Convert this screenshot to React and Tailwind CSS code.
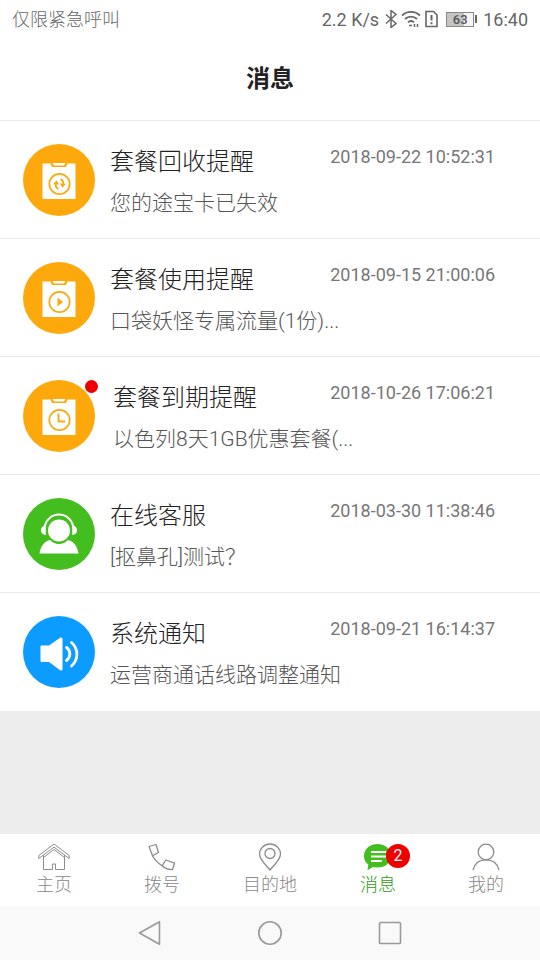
import React, { useState } from "react";

const RecycleIcon = () => (
    <g fill="none" stroke="#fea90b" strokeWidth="1.800">
        <path d="M35.500 44.800c-2 -.8 -3 -2.800 -2.700 -5M37.500 35.200c2 .8 3 2.800 2.700 5" />
        <path d="M30.200 40.200l3.300 -3.900l2.600 4.300zM42.800 39.800l-3.300 3.900l-2.600 -4.300z" fill="#fea90b" stroke="none" />
    </g>
);

const PlayIcon = () => (
    <path d="M34.500 35.500v9l5.500 -4.500z" fill="#fea90b" />
);

const ClockIcon = () => (
    <path d="M35.500 33.500v8h6.500" fill="none" stroke="#fea90b" strokeWidth="1.800" />
);

const PackageIcon = ({ children }) => (
    <svg viewBox="0 0 72 72" className="block size-[72px]" aria-hidden="true">
        <circle cx="36" cy="36" r="36" fill="#fea90b" />
        <path d="M19.500 19.500h8l1.500 3.500h14l1.500 -3.500h8v35.500h-33z" fill="#fff" />
        <path d="M29.500 19h13l-1.500 2.500h-10z" fill="#fff" />
        <circle cx="36.500" cy="40" r="10.200" fill="none" stroke="#fea90b" strokeWidth="1.700" />
        {children}
    </svg>
);

const SupportIcon = () => (
    <svg viewBox="0 0 72 72" className="block size-[72px]" aria-hidden="true">
        <circle cx="36" cy="36" r="36" fill="#44be1f" />
        <circle cx="36" cy="32.500" r="11" fill="#fff" />
        <path d="M21.800 28.500a14.400 14.400 0 0 1 28.400 0" fill="none" stroke="#fff" strokeWidth="2" />
        <path d="M22.800 27.500v9.500c-6.500 0 -6.500 -9.500 0 -9.500zM49.200 27.500v9.500c6.500 0 6.500 -9.500 0 -9.500z" fill="#fff" />
        <path d="M16.500 55.500c1 -7 4.500 -12 10.500 -13.500c5 5.500 13 5.500 18 0c6 1.500 9.500 6.500 10.500 13.500z" fill="#fff" />
    </svg>
);

const SpeakerIcon = () => (
    <svg viewBox="0 0 72 72" className="block size-[72px]" aria-hidden="true">
        <circle cx="36" cy="36" r="36" fill="#0c9cff" />
        <path d="M18.500 29.500h7.500l11.500 -8q2 -.5 2 1.500v30q0 2 -2 1.500l-11.500 -8.500h-7.500q-1 0 -1 -1v-14.500q0 -1 1 -1z" fill="#fff" />
        <path d="M43.500 31.500a8 8 0 0 1 0 13M48.500 26.500a15.500 15.500 0 0 1 0 23.500" fill="none" stroke="#fff" strokeWidth="2.800" strokeLinecap="round" />
    </svg>
);

const messages = [
    {
        id: 1,
        title: "套餐回收提醒",
        text: "您的途宝卡已失效",
        date: "2018-09-22 10:52:31",
        unread: false,
        icon: <PackageIcon><RecycleIcon /></PackageIcon>,
    },
    {
        id: 2,
        title: "套餐使用提醒",
        text: "口袋妖怪专属流量(1份)...",
        date: "2018-09-15 21:00:06",
        unread: false,
        icon: <PackageIcon><PlayIcon /></PackageIcon>,
    },
    {
        id: 3,
        title: "套餐到期提醒",
        text: "以色列8天1GB优惠套餐(...",
        date: "2018-10-26 17:06:21",
        unread: true,
        icon: <PackageIcon><ClockIcon /></PackageIcon>,
    },
    {
        id: 4,
        title: "在线客服",
        text: "[抠鼻孔]测试？",
        date: "2018-03-30 11:38:46",
        unread: false,
        icon: <SupportIcon />,
    },
    {
        id: 5,
        title: "系统通知",
        text: "运营商通话线路调整通知",
        date: "2018-09-21 16:14:37",
        unread: false,
        icon: <SpeakerIcon />,
    },
];

const tabs = [
    {
        key: "home",
        label: "主页",
        icon: (
            <svg viewBox="0 0 32 28" className="h-7 w-8" fill="none" stroke="#8c8c8c" strokeWidth="1" aria-hidden="true">
                <path d="M.8 12.500L16 1l15.200 11.500v3L16 4.200L.8 15.500z" />
                <path d="M5.500 12.300v14.200h9v-5.500h3v5.500h9v-14.200" />
                <path d="M5.500 14.500L16 6.500l10.500 8" />
            </svg>
        ),
    },
    {
        key: "dial",
        label: "拨号",
        icon: (
            <svg viewBox="0 0 32 28" className="h-7 w-8" fill="none" stroke="#8c8c8c" strokeWidth="1.300" strokeLinejoin="round" aria-hidden="true">
                <path d="M3 3.500l7 -2l2.500 8l-6 3.300z" />
                <path d="M6.500 12.800c2 4 5 7 9.500 10" />
                <path d="M16 22.800l4 -5.800l8.500 3.200l-2 6.300c-4 .3 -7.500 -1.200 -10.500 -3.700z" />
            </svg>
        ),
    },
    {
        key: "places",
        label: "目的地",
        icon: (
            <svg viewBox="0 0 32 28" className="h-7 w-8" fill="none" stroke="#8c8c8c" strokeWidth="1.300" aria-hidden="true">
                <path d="M16 27c-3 -4 -10.500 -10 -10.500 -16a10.500 10 0 0 1 21 0c0 6 -7.500 12 -10.500 16z" />
                <circle cx="16" cy="10.500" r="5" />
            </svg>
        ),
    },
    {
        key: "messages",
        label: "消息",
        badge: 2,
        icon: (
            <svg viewBox="0 0 32 28" className="h-7 w-8" aria-hidden="true">
                <path d="M15.500 1c8 0 13.500 5.300 13.500 12s-5.500 11.500 -13.500 11.500c-2 0 -3.500 -.3 -4.500 -.5l-5.500 3.200l.8 -5.700c-3 -2.200 -4.300 -5 -4.300 -8.500c0 -6.700 5.500 -12 13.500 -12z" fill="#44be1f" />
                <path d="M9 9h15M9 13.500h15M9 18h11" stroke="#fff" strokeWidth="2" />
            </svg>
        ),
    },
    {
        key: "me",
        label: "我的",
        icon: (
            <svg viewBox="0 0 32 28" className="h-7 w-8" fill="none" stroke="#8c8c8c" strokeWidth="1.300" aria-hidden="true">
                <circle cx="16" cy="9" r="7.800" />
                <path d="M3 27c1.500 -6.500 6.500 -10.200 13 -10.200s11.500 3.700 13 10.200" />
            </svg>
        ),
    },
];

const StatusBar = () => (
    <div className="flex h-[38px] items-center justify-between px-3 text-[18px] text-[#666666]">
        <span className="font-light">仅限紧急呼叫</span>
        <div className="flex items-center">
            <span className="mr-1.5">2.2 K/s</span>
            <svg viewBox="0 0 12 18" className="mr-1 h-[18px] w-3" fill="none" stroke="currentColor" strokeWidth="1.500" aria-hidden="true">
                <path d="M1 4.500l10 9l-5 4v-17l5 4l-10 9" />
            </svg>
            <svg viewBox="0 0 20 18" className="mr-1 h-[18px] w-5" fill="none" stroke="currentColor" strokeWidth="1.800" aria-hidden="true">
                <path d="M1 5.500c5 -4.800 13 -4.800 18 0M4 9c3.500 -3.200 8.500 -3.200 12 0M7 12.300c2 -1.700 4 -1.700 6 0" />
                <path d="M8 15.500h3M13.500 14v3M16.500 14v3" strokeWidth="1.500" />
            </svg>
            <svg viewBox="0 0 13 18" className="mr-2 h-[18px] w-[13px]" fill="none" stroke="currentColor" strokeWidth="1.600" aria-hidden="true">
                <path d="M1 1.500h7.500l3.500 3.500v11.500h-11z" />
                <path d="M6.500 5v5.500M6.500 12.200v2" strokeWidth="2" />
            </svg>
            <div className="flex items-center gap-px">
                <div className="flex h-[15px] w-7 items-center justify-center border border-[#888888] bg-linear-to-r from-[#c4c4c4] from-65% to-[#f4f4f4] to-65% text-[13px] font-medium leading-none text-[#555555]">63</div>
                <div className="h-2 w-0.5 bg-[#666666]"></div>
            </div>
            <span className="ml-1.5">16:40</span>
        </div>
    </div>
);

const App = () => {
    const [active, setActive] = useState("messages");

    return (
        <div className="flex min-h-screen flex-col bg-[#ededed] font-['Roboto','Noto_Sans_CJK_SC',sans-serif]">
            <header className="border-b border-[#e9e9e9] bg-white">
                <StatusBar />
                <h1 className="pt-[25px] pb-[25px] text-center text-[24px] leading-8 font-bold text-[#222222]">消息</h1>
            </header>

            <main className="flex-1">
                <ul className="bg-white">
                    {messages.map((item) => (
                        <li key={item.id} className="flex gap-[15px] border-b border-[#e9e9e9] pt-[23px] pr-[45px] pb-[19px] pl-[23px] last:border-white">
                            <div className={item.unread ? "relative w-[75px] shrink-0" : "w-[72px] shrink-0"}>
                                {item.icon}
                                {item.unread && <span className="absolute top-0 right-0 size-[13px] rounded-full bg-[#ee0000]"></span>}
                            </div>
                            <div className="min-w-0 flex-1 pt-0.5">
                                <div className="flex justify-between">
                                    <h2 className="text-[24px] leading-8 font-light text-[#222222]">{item.title}</h2>
                                    <time className="text-[18px] leading-[22px] text-[#777777]">{item.date}</time>
                                </div>
                                <p className="mt-[9px] truncate text-[21px] leading-8 font-light text-[#555555]">{item.text}</p>
                            </div>
                        </li>
                    ))}
                </ul>
            </main>

            <nav className="grid grid-cols-5 bg-white">
                {tabs.map((tab) => (
                    <button key={tab.key} type="button" onClick={() => setActive(tab.key)} className="flex flex-col items-center gap-0.5 pt-[9px] pb-[9px]">
                        <span className="relative">
                            {tab.icon}
                            {tab.badge && (
                                <span className="absolute top-px left-6 flex size-6 items-center justify-center rounded-full bg-[#ee0000] text-[16px] text-white">{tab.badge}</span>
                            )}
                        </span>
                        <span className={active === tab.key ? "text-[18px] leading-6 font-light text-[#2f9c12]" : "text-[18px] leading-6 font-light text-[#888888]"}>{tab.label}</span>
                    </button>
                ))}
            </nav>

            <div className="flex items-center justify-center gap-24 bg-[#f9f9f9] py-[15px]">
                <button type="button" aria-label="返回">
                    <svg viewBox="0 0 24 24" className="block size-6" fill="none" stroke="#999999" strokeWidth="1.600" strokeLinejoin="round" aria-hidden="true">
                        <path d="M1.500 12l20 -11.200v22.400z" />
                    </svg>
                </button>
                <button type="button" aria-label="主屏幕">
                    <svg viewBox="0 0 24 24" className="block size-6" fill="none" stroke="#999999" strokeWidth="1.600" aria-hidden="true">
                        <circle cx="12" cy="12" r="11.200" />
                    </svg>
                </button>
                <button type="button" aria-label="最近任务">
                    <svg viewBox="0 0 24 24" className="block size-6" fill="none" stroke="#999999" strokeWidth="1.600" aria-hidden="true">
                        <rect x="1.500" y="1.500" width="21" height="21" rx="1" />
                    </svg>
                </button>
            </div>
        </div>
    );
};

export default App;
